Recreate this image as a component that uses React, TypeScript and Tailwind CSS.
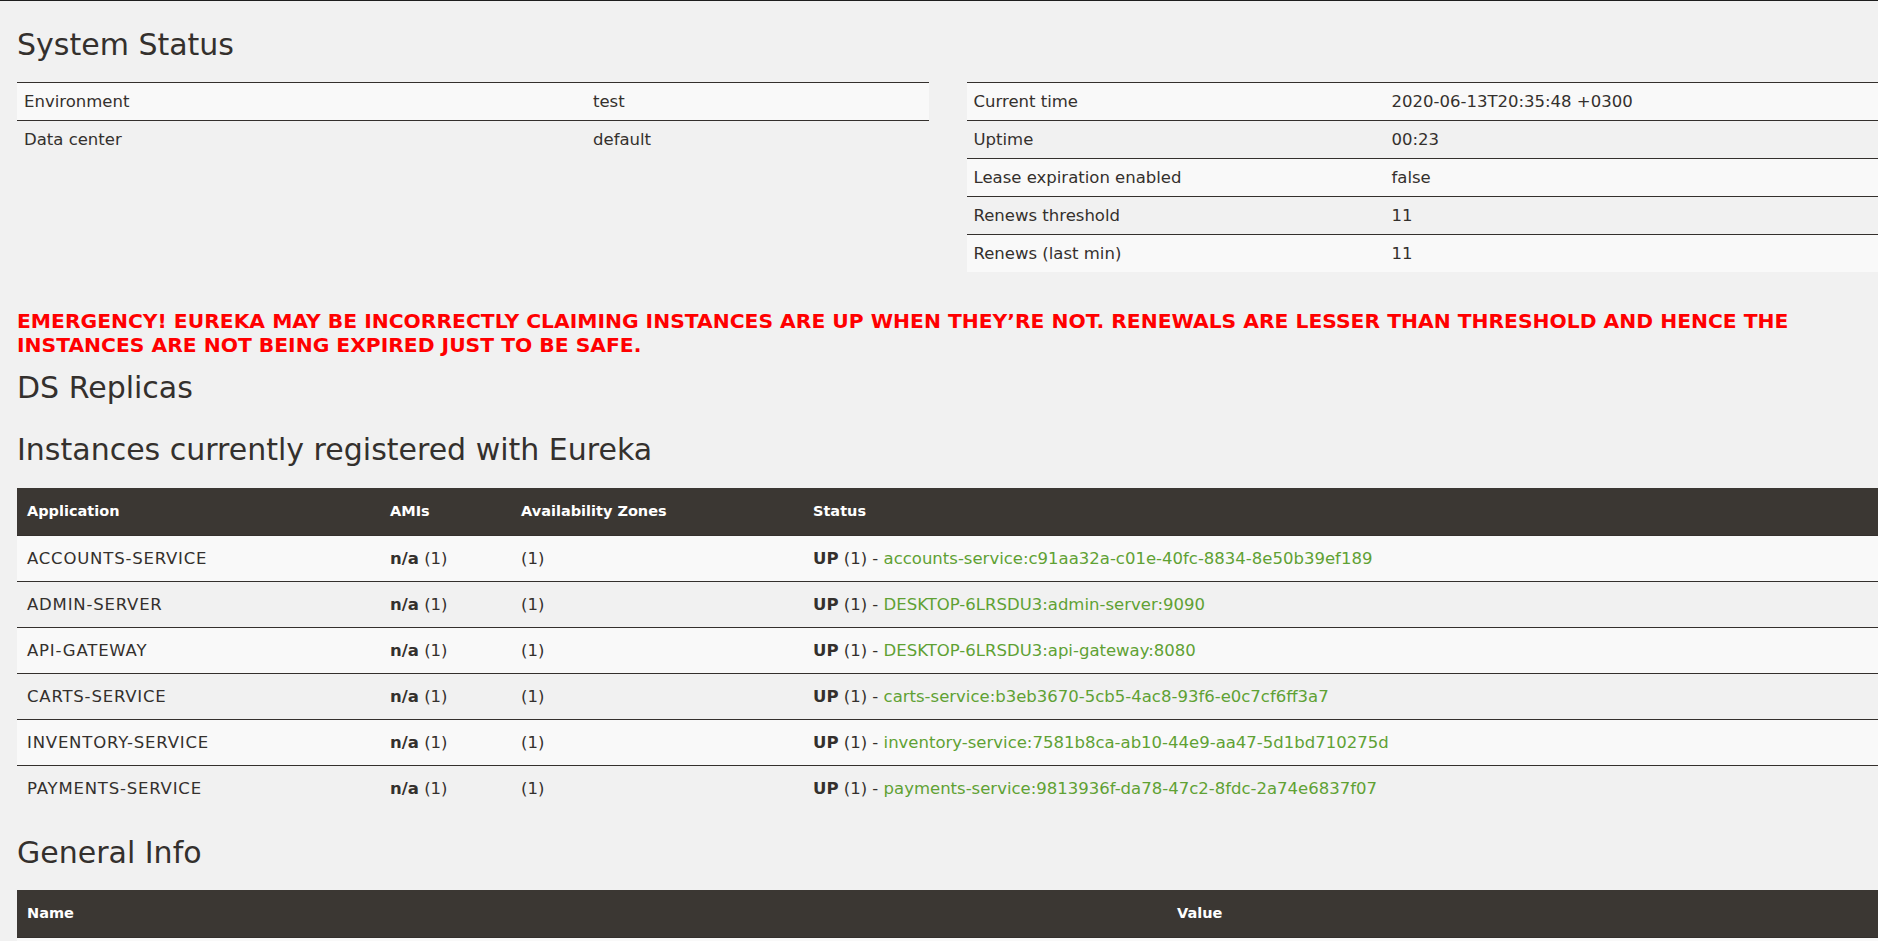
import React from "react";

const leftInfo = [
  ["Environment", "test"],
  ["Data center", "default"],
];

const rightInfo = [
  ["Current time", "2020-06-13T20:35:48 +0300"],
  ["Uptime", "00:23"],
  ["Lease expiration enabled", "false"],
  ["Renews threshold", "11"],
  ["Renews (last min)", "11"],
];

const instances = [
  ["ACCOUNTS-SERVICE", "accounts-service:c91aa32a-c01e-40fc-8834-8e50b39ef189"],
  ["ADMIN-SERVER", "DESKTOP-6LRSDU3:admin-server:9090"],
  ["API-GATEWAY", "DESKTOP-6LRSDU3:api-gateway:8080"],
  ["CARTS-SERVICE", "carts-service:b3eb3670-5cb5-4ac8-93f6-e0c7cf6ff3a7"],
  ["INVENTORY-SERVICE", "inventory-service:7581b8ca-ab10-44e9-aa47-5d1bd710275d"],
  ["PAYMENTS-SERVICE", "payments-service:9813936f-da78-47c2-8fdc-2a74e6837f07"],
];

const generalInfo = [
  ["total-avail-memory", "1152mb"],
  ["environment", "test"],
  ["num-of-cpus", "8"],
  ["current-memory-usage", "402mb (34%)"],
  ["server-uptime", "00:23"],
];

function InfoTable({ rows, labelWidth }: { rows: string[][]; labelWidth: string }) {
  return (
    <table className="w-full border-collapse table-fixed">
      <colgroup>
        <col className={labelWidth} />
        <col />
      </colgroup>
      <tbody>
        {rows.map(([label, value], i) => (
          <tr key={label} className={i % 2 === 0 ? "bg-[#f9f9f9]" : ""}>
            <td className="border-t border-[#34302d] px-[7px] py-2 leading-[21px]">{label}</td>
            <td className="border-t border-[#34302d] px-[7px] py-2 leading-[21px]">{value}</td>
          </tr>
        ))}
      </tbody>
    </table>
  );
}

function Heading({ children, className }: { children: React.ReactNode; className: string }) {
  return <h1 className={`text-[30px] leading-[36px] font-normal text-[#34302d] ${className}`}>{children}</h1>;
}

export default function App() {
  return (
    <div className="min-h-screen overflow-hidden bg-[#f1f1f1] font-['DejaVu_Sans',sans-serif] text-[16.5px] text-[#34302d]">
      <div className="h-px bg-[#1e1e1e]" />
      <div className="pl-[17px]">
        <Heading className="mt-[26px] mb-[19px]">System Status</Heading>

        <div className="grid grid-cols-2 items-start gap-[38px]">
          <InfoTable rows={leftInfo} labelWidth="w-[569px]" />
          <InfoTable rows={rightInfo} labelWidth="w-[418px]" />
        </div>

        <h4 className="mt-[37px] text-[20.3px] leading-[24px] font-bold text-[#ff0000]">
          EMERGENCY! EUREKA MAY BE INCORRECTLY CLAIMING INSTANCES ARE UP WHEN THEY’RE NOT. RENEWALS ARE LESSER THAN
          THRESHOLD AND HENCE THE INSTANCES ARE NOT BEING EXPIRED JUST TO BE SAFE.
        </h4>

        <Heading className="mt-[13px]">DS Replicas</Heading>

        <Heading className="mt-[26px] mb-5">Instances currently registered with Eureka</Heading>

        <table className="w-full border-collapse table-fixed">
          <colgroup>
            <col className="w-[363px]" />
            <col className="w-[131px]" />
            <col className="w-[292px]" />
            <col />
          </colgroup>
          <thead>
            <tr className="bg-[#3b3733] text-white">
              <th className="px-[10px] py-[13px] text-left text-[14.5px] leading-[21px] font-bold">Application</th>
              <th className="px-[10px] py-[13px] text-left text-[14.5px] leading-[21px] font-bold">AMIs</th>
              <th className="px-[10px] py-[13px] text-left text-[14.5px] leading-[21px] font-bold">Availability Zones</th>
              <th className="px-[10px] py-[13px] text-left text-[14.5px] leading-[21px] font-bold">Status</th>
            </tr>
          </thead>
          <tbody>
            {instances.map(([app, id], i) => (
              <tr key={app} className={i % 2 === 0 ? "bg-[#f9f9f9]" : ""}>
                <td className="border-t border-[#34302d] px-[10px] py-3 leading-[21px] tracking-[0.8px]">{app}</td>
                <td className="border-t border-[#34302d] px-[10px] py-3 leading-[21px]">
                  <b>n/a</b> (1)
                </td>
                <td className="border-t border-[#34302d] px-[10px] py-3 leading-[21px]">(1)</td>
                <td className="border-t border-[#34302d] px-[10px] py-3 leading-[21px] whitespace-nowrap">
                  <b>UP</b> (1) - <a className="text-[#5fa134]">{id}</a>
                </td>
              </tr>
            ))}
          </tbody>
        </table>

        <Heading className="mt-[24px] mb-[19px]">General Info</Heading>

        <table className="w-full border-collapse table-fixed">
          <colgroup>
            <col className="w-[1150px]" />
            <col />
          </colgroup>
          <thead>
            <tr className="bg-[#3b3733] text-white">
              <th className="px-[10px] py-[13px] text-left text-[14.5px] leading-[21px] font-bold">Name</th>
              <th className="px-[10px] py-[13px] text-left text-[14.5px] leading-[21px] font-bold">Value</th>
            </tr>
          </thead>
          <tbody>
            {generalInfo.map(([name, value], i) => (
              <tr key={name} className={i % 2 === 0 ? "bg-[#f9f9f9]" : ""}>
                <td className="border-t border-[#34302d] px-[10px] py-3 leading-[21px]">{name}</td>
                <td className="border-t border-[#34302d] px-[10px] py-3 leading-[21px]">{value}</td>
              </tr>
            ))}
          </tbody>
        </table>
      </div>
    </div>
  );
}
